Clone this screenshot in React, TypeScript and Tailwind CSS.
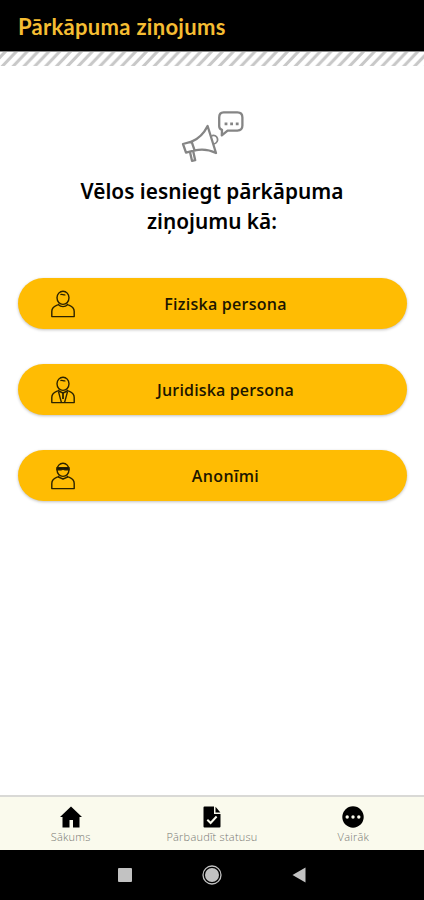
import type {ReactNode} from 'react';

type PersonKind = 'natural' | 'legal' | 'anonymous';

const options: {kind: PersonKind; label: string; text: string}[] = [
  {kind: 'natural', label: 'Fiziska persona', text: 'tracking-[0.25px]'},
  {kind: 'legal', label: 'Juridiska persona', text: 'tracking-[0.15px]'},
  {kind: 'anonymous', label: 'Anonīmi', text: 'tracking-[0.35px]'},
];

function PersonIcon({kind}: {kind: PersonKind}) {
  return (
    <svg width="26" height="28" viewBox="0 0 26 28" fill="none" stroke="#2b2200" strokeWidth="1.4" strokeLinejoin="round">
      <ellipse cx="13" cy="7.8" rx="6" ry="6.6" />
      <path d="M9.2 13.6C8.5 16 1.8 15.2 1.8 21.4v5.2h22.4v-5.2c0-6.2-6.7-5.4-7.4-7.8" />
      {kind === 'natural' && <path d="M8.6 15c2.4 2.2 6.4 2.2 8.8 0M10.4 4.6c1.6-1 3.2.8 5 .2" />}
      {kind === 'legal' && (
        <>
          <path d="M8.4 15.4l3 11M17.6 15.4l-3 11M8.6 15l4.4 2 4.4-2M10.4 4.6c1.6-1 3.2.8 5 .2" />
          <path d="M13 17v6" strokeWidth="1.8" />
        </>
      )}
      {kind === 'anonymous' && (
        <>
          <path d="M7 5.6h12v2.2h-4l-2-.6-2 .6H7z" fill="#111" />
          <path d="M8 14.8l5 2.2 5-2.2" />
        </>
      )}
    </svg>
  );
}

function MegaphoneIcon() {
  return (
    <svg width="64" height="54" viewBox="0 0 64 54" fill="none" stroke="#858585" strokeWidth="2.3" strokeLinejoin="round">
      <path d="M3 34l8.6-2.4 3 8.8-8.6 2.2z" />
      <path d="M11.6 31.6C18 29 23.8 23.8 27.6 16l8.4 27C29 39.4 22 38.800 14.600 40.400" />
      <path d="M31.4 25.8c6-2.4 9 6 2.6 8.2" strokeWidth="1.8" />
      <path d="M10 42l2 8.8 3.2-.6-2-9" />
      <path d="M43.6 2.4h13.8q5 0 5 5v8.2q0 5-5 5h-9.800L41.800 25.400l.2-5.600q-2.800-1-2.800-3.600V7.400q0-5 4.400-5z" />
      <path d="M44.6 13.8h2.8M50.2 13.8H53M55.800 13.800h2.800" strokeWidth="2.8" />
    </svg>
  );
}

function HomeIcon() {
  return (
    <svg width="22" height="22" viewBox="0 0 22 22">
      <path d="M11 .5L22 11h-2.500v10.500H13V14H9.500v7.500H2.500V11H0z" />
    </svg>
  );
}

function DocumentCheckIcon() {
  return (
    <svg width="18" height="22" viewBox="0 0 18 22">
      <path d="M1.500 .5H11V8h6.500v12.500q0 1-1 1H1.500q-1 0-1-1v-19q0-1 1-1z" />
      <path d="M12.500 .8L17.400 6.500H12.500z" />
      <path d="M4.300 13.800l3.300 3.200 6-6.500" fill="none" stroke="#fafaed" strokeWidth="2" />
    </svg>
  );
}

function MoreIcon() {
  return (
    <svg width="22" height="22" viewBox="0 0 22 22">
      <circle cx="11" cy="11" r="10.7" />
      <g fill="#fafaed">
        <circle cx="5.2" cy="11" r="1.7" />
        <circle cx="11" cy="11" r="1.7" />
        <circle cx="16.8" cy="11" r="1.7" />
      </g>
    </svg>
  );
}

function Tab({icon, label}: {icon: ReactNode; label: string}) {
  return (
    <button className="flex flex-1 flex-col items-center pt-[9px]">
      {icon}
      <span className="mt-0.5 whitespace-nowrap text-[11px] leading-[14px] font-light tracking-[0.22px] text-[#777773]">{label}</span>
    </button>
  );
}

export default function App() {
  return (
    <div className="flex h-screen w-full flex-col bg-white font-['Open_Sans',sans-serif] text-black">
      <header className="h-[51px] shrink-0 bg-black pl-[18px] font-['Lato',sans-serif] text-[22px] leading-[53px] font-bold tracking-[0.3px] text-[#f5bd32]">
        Pārkāpuma ziņojums
      </header>
      <svg className="h-[15px] w-full shrink-0">
        <defs>
          <pattern id="hazard" width="10.85" height="15" patternUnits="userSpaceOnUse">
            <path d="M-22 18L-2 -3M-11.15 18L8.85 -3M-.3 18L19.7 -3M10.55 18L30.55 -3" stroke="#c8c8c8" strokeWidth="3" />
          </pattern>
        </defs>
        <rect width="100%" height="15" fill="url(#hazard)" />
        <rect width="100%" height="1" fill="#8c8c8c" />
      </svg>

      <main className="flex flex-1 flex-col items-center px-[17.5px] pt-[44px]">
        <MegaphoneIcon />
        <h1 className="mt-3 text-center font-['Noto_Sans',sans-serif] text-[20.8px] leading-[30px] font-semibold">
          Vēlos iesniegt pārkāpuma
          <br />
          ziņojumu kā:
        </h1>
        <div className="mt-[41.5px] flex w-full flex-col gap-[34.5px]">
          {options.map(({kind, label, text}) => (
            <button key={kind} className="flex h-[51.5px] items-center rounded-full bg-[#ffbc03] pt-0.5 pl-8 shadow-[0_1px_3px_rgba(0,0,0,0.25)]">
              <PersonIcon kind={kind} />
              <span className={`flex-1 pr-[31px] text-center text-[16px] font-semibold text-[#1c1600] ${text}`}>{label}</span>
            </button>
          ))}
        </div>
      </main>

      <nav className="flex h-[55px] shrink-0 border-t-2 border-[#d9d9d6] bg-[#fafaed]">
        <Tab icon={<HomeIcon />} label="Sākums" />
        <Tab icon={<DocumentCheckIcon />} label="Pārbaudīt statusu" />
        <Tab icon={<MoreIcon />} label="Vairāk" />
      </nav>
      <div className="flex h-[50px] shrink-0 items-center justify-center gap-[70px] bg-black">
        <div className="size-[14px] rounded-[1px] bg-[#c2c2c2]" />
        <svg width="20" height="20" viewBox="0 0 20 20" fill="#c2c2c2">
          <circle cx="10" cy="10" r="7" />
          <circle cx="10" cy="10" r="9" fill="none" stroke="#c2c2c2" strokeWidth="1.3" />
        </svg>
        <svg width="14" height="16" viewBox="0 0 14 16" fill="#c2c2c2">
          <path d="M13.500 .5v15L.5 8z" />
        </svg>
      </div>
    </div>
  );
}
